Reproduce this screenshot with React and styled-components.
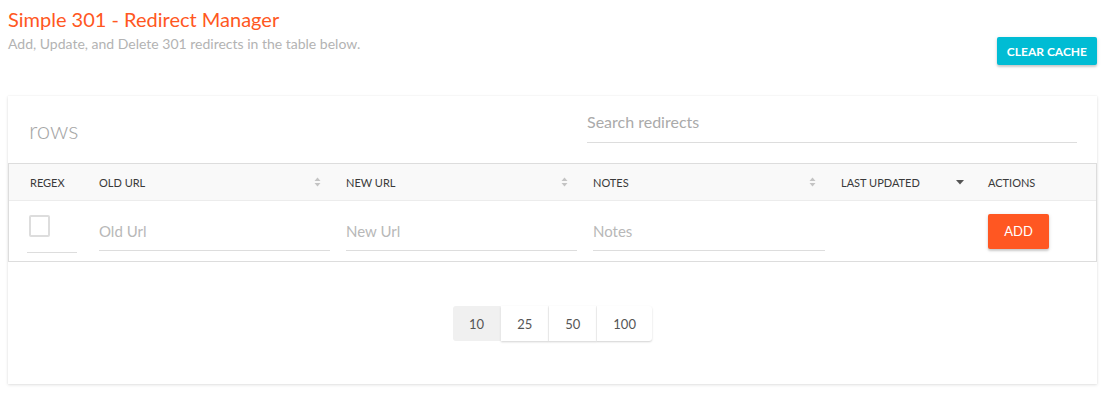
import React, { useState } from 'react';
import styled, { createGlobalStyle } from 'styled-components';

const GlobalStyle = createGlobalStyle`
  body {
    margin: 0;
    background: #ffffff;
    font-family: Lato, "Open Sans", "Liberation Sans", sans-serif;
  }
  * { box-sizing: border-box; }
`;

const Page = styled.div`
  padding: 7px 10px 10px 8px;
`;

const Header = styled.header`
  display: flex;
  justify-content: space-between;
  align-items: flex-start;
`;

const Title = styled.h1`
  margin: 0;
  font-size: 20px;
  line-height: 24px;
  font-weight: 400;
  color: #ff5722;
`;

const Subtitle = styled.p`
  margin: 4px 0 0;
  font-size: 14px;
  line-height: 17px;
  color: #b3b3b3;
`;

const RaisedButton = styled.button`
  border: none;
  border-radius: 2px;
  color: #ffffff;
  font-family: inherit;
  font-weight: 700;
  text-transform: uppercase;
  cursor: pointer;
  box-shadow: 0 2px 2px rgba(0,0,0,0.14), 0 1px 4px rgba(0,0,0,0.12);
`;

const CacheButton = styled(RaisedButton)`
  margin-top: 30px;
  height: 28px;
  padding: 0 10px;
  font-size: 12px;
  background: #00bcd4;
`;

const Card = styled.section`
  margin-top: 31px;
  background: #ffffff;
  box-shadow: 0 1px 3px rgba(0,0,0,0.12), 0 0 1px rgba(0,0,0,0.08);
  padding-bottom: 43px;
`;

const Toolbar = styled.div`
  display: flex;
  align-items: center;
  height: 67px;
  padding: 0 20px 0 21px;
`;

const RowsLabel = styled.div`
  flex: 1;
  font-size: 24px;
  font-weight: 300;
  color: #a6a6a6;
`;

const SearchInput = styled.input`
  width: 490px;
  height: 38px;
  margin-top: -11px;
  padding: 0 0 4px;
  border: none;
  border-bottom: 1px solid #dddddd;
  outline: none;
  font-family: inherit;
  font-size: 16px;
  color: #444;
  &::placeholder { color: #aaaaaa; }
`;

const Table = styled.div`
  border: 1px solid #dddddd;
`;

const Grid = styled.div`
  display: grid;
  grid-template-columns: 82px 247px 247px 248px 147px 1fr;
  align-items: center;
`;

const HeadRow = styled(Grid)`
  height: 37px;
  background: #f9f9f9;
  border-bottom: 1px solid #ececec;
`;

const HeadCell = styled.div`
  display: flex;
  align-items: center;
  justify-content: space-between;
  padding: 0 ${p => p.$pr || 8}px 0 ${p => p.$pl || 8}px;
  font-size: 11px;
  color: #3a3a3a;
  text-transform: uppercase;
`;

const BodyRow = styled(Grid)`
  height: 60px;
`;

const Cell = styled.div`
  padding: 0 8px 0 ${p => p.$pl || 8}px;
`;

const CheckWrap = styled.div`
  width: 50px;
  height: 44px;
  border-bottom: 1px solid #dddddd;
  padding: 6px 0 0 2px;
`;

const CheckBox = styled.span`
  display: block;
  width: 21px;
  height: 22px;
  border: 2px solid #dddddd;
  border-radius: 2px;
`;

const FieldInput = styled.input`
  display: block;
  width: 100%;
  height: 39px;
  border: none;
  border-bottom: 1px solid #dddddd;
  outline: none;
  padding: 0;
  font-family: inherit;
  font-size: 15px;
  color: #444;
  &::placeholder { color: #b8b8b8; }
`;

const AddButton = styled(RaisedButton)`
  width: 61px;
  height: 35px;
  font-size: 13px;
  font-weight: 400;
  background: #ff5722;
`;

const Pager = styled.div`
  display: flex;
  justify-content: center;
  margin-top: 44px;
`;

const PagerGroup = styled.div`
  display: inline-flex;
  border-radius: 3px;
`;

const PageButton = styled.button`
  height: 35px;
  padding: 0 16px;
  border: none;
  border-right: 1px solid #f6f6f6;
  background: ${p => (p.$active ? '#f0f0f0' : '#ffffff')};
  box-shadow: ${p => (p.$active ? 'none' : '0 1px 2px rgba(0,0,0,0.18)')};
  font-family: inherit;
  font-size: 13px;
  color: #555555;
  cursor: pointer;
  &:first-child { border-radius: 3px 0 0 3px; }
  &:last-child { border-radius: 0 3px 3px 0; border-right: none; }
`;

function SortIcon() {
  return (
    <svg width="7" height="10" viewBox="0 0 7 10">
      <path d="M3.5 0.5 L6.5 4 H0.5 Z" fill="#c4c4c4" />
      <path d="M3.5 9.5 L6.5 6 H0.5 Z" fill="#c4c4c4" />
    </svg>
  );
}

function DownIcon() {
  return (
    <svg width="8" height="5" viewBox="0 0 8 5">
      <path d="M0 0 H8 L4 4.5 Z" fill="#555555" />
    </svg>
  );
}

export default function App() {
  const [perPage, setPerPage] = useState(10);

  return (
    <>
      <GlobalStyle />
      <Page>
        <Header>
          <div>
            <Title>Simple 301 - Redirect Manager</Title>
            <Subtitle>Add, Update, and Delete 301 redirects in the table below.</Subtitle>
          </div>
          <CacheButton>Clear Cache</CacheButton>
        </Header>

        <Card>
          <Toolbar>
            <RowsLabel>rows</RowsLabel>
            <SearchInput placeholder="Search redirects" />
          </Toolbar>

          <Table>
            <HeadRow>
              <HeadCell $pl={21}>Regex</HeadCell>
              <HeadCell $pr={17}>Old URL <SortIcon /></HeadCell>
              <HeadCell $pr={17}>New URL <SortIcon /></HeadCell>
              <HeadCell $pr={17}>Notes <SortIcon /></HeadCell>
              <HeadCell $pr={16}>Last Updated <DownIcon /></HeadCell>
              <HeadCell>Actions</HeadCell>
            </HeadRow>
            <BodyRow>
              <Cell $pl={18}>
                <CheckWrap><CheckBox /></CheckWrap>
              </Cell>
              <Cell><FieldInput placeholder="Old Url" /></Cell>
              <Cell><FieldInput placeholder="New Url" /></Cell>
              <Cell><FieldInput placeholder="Notes" /></Cell>
              <Cell />
              <Cell><AddButton>Add</AddButton></Cell>
            </BodyRow>
          </Table>

          <Pager>
            <PagerGroup>
              {[10, 25, 50, 100].map(n => (
                <PageButton key={n} $active={n === perPage} onClick={() => setPerPage(n)}>
                  {n}
                </PageButton>
              ))}
            </PagerGroup>
          </Pager>
        </Card>
      </Page>
    </>
  );
}
